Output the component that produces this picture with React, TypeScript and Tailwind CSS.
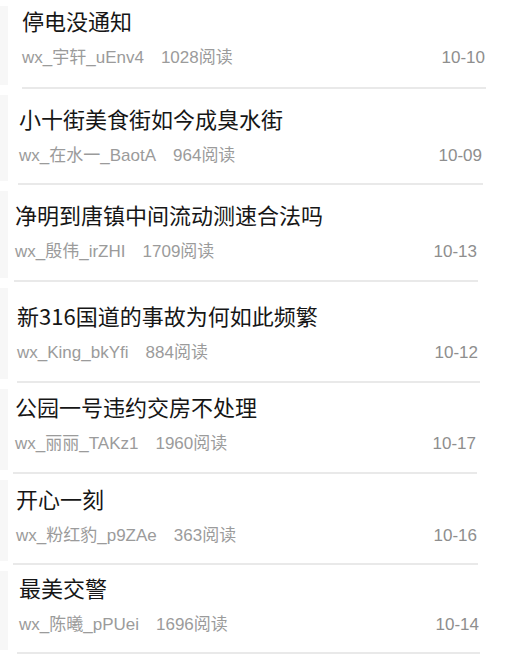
const rows = [
  { title: '停电没通知', user: 'wx_宇轩_uEnv4', reads: 1028, date: '10-10', box: 'pt-[5px] pl-[22px] pr-[45px]', line: 'ml-[22px] mr-[44px]', gap: 'pb-[18px]' },
  { title: '小十街美食街如今成臭水街', user: 'wx_在水一_BaotA', reads: 964, date: '10-09', box: 'pt-[14px] pl-[19px] pr-[48px]', line: 'ml-[18px] mr-[47px]', gap: 'pb-[16px]' },
  { title: '净明到唐镇中间流动测速合法吗', user: 'wx_殷伟_irZHI', reads: 1709, date: '10-13', box: 'pt-[14px] pl-[15px] pr-[53px]', line: 'ml-[14px] mr-[52px]', gap: 'pb-[17px]' },
  { title: '新316国道的事故为何如此频繁', user: 'wx_King_bkYfi', reads: 884, date: '10-12', box: 'pt-[18px] pl-[17px] pr-[52px]', line: 'ml-[17px] mr-[50px]', gap: 'pb-[17px]' },
  { title: '公园一号违约交房不处理', user: 'wx_丽丽_TAKz1', reads: 1960, date: '10-17', box: 'pt-[8px] pl-[15px] pr-[54px]', line: 'ml-[13px] mr-[53px]', gap: 'pb-[17px]' },
  { title: '开心一刻', user: 'wx_粉红豹_p9ZAe', reads: 363, date: '10-16', box: 'pt-[9px] pl-[16px] pr-[53px]', line: 'ml-[13px] mr-[52px]', gap: 'pb-[16px]' },
  { title: '最美交警', user: 'wx_陈曦_pPUei', reads: 1696, date: '10-14', box: 'pt-[7px] pl-[19px] pr-[51px]', line: 'ml-[17px] mr-[50px]', gap: 'pb-[16px]' },
];

export default function App() {
  return (
    <div
      className="w-[530px] h-[666px] overflow-hidden bg-white"
      style={{ fontFamily: '"Liberation Sans", "Noto Sans CJK SC", sans-serif' }}
    >
      {rows.map((r) => (
        <div key={r.date} className="relative">
          {/* faint strip on the left edge */}
          <div className="absolute left-0 top-[6px] bottom-[4px] w-[8px] bg-[#f7f7f7]" />
          <div className={r.box + ' ' + r.gap}>
            <div
              className="text-[22px] leading-[30px] text-[#161616]"
              style={{ fontFamily: '"Noto Sans CJK SC", sans-serif' }}
            >
              {r.title}
            </div>
            <div className="mt-[12px] flex items-center justify-between text-[17px] leading-[22px] text-[#9b9b9b]">
              <div className="flex gap-[17px]">
                <span>{r.user}</span>
                <span>{r.reads}阅读</span>
              </div>
              <span className="text-[#8e8e8e]">{r.date}</span>
            </div>
          </div>
          <div className={'h-[2px] bg-[#e9e9e9] ' + r.line} />
        </div>
      ))}
    </div>
  );
}
